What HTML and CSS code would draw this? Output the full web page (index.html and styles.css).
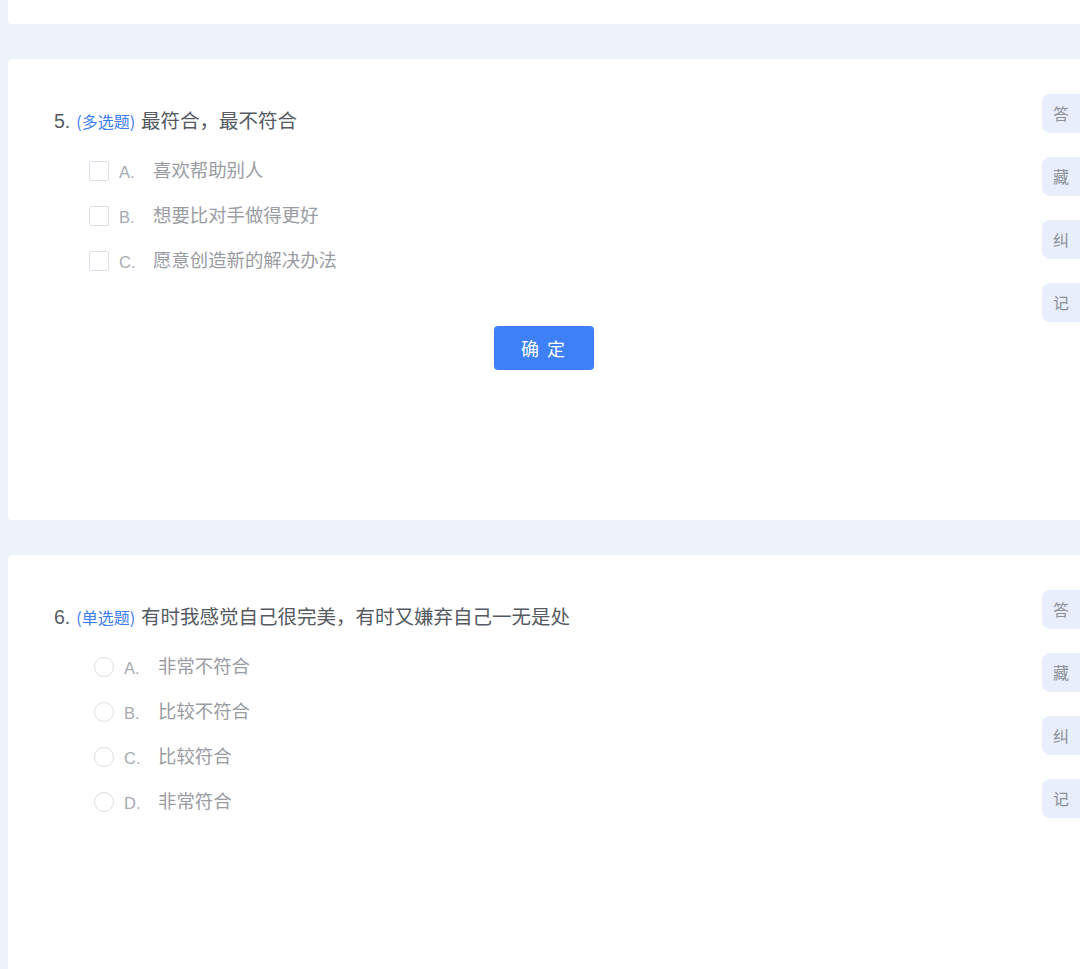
FILE: index.html
```html
<!DOCTYPE html>
<html lang="zh-CN">
  <head>
    <meta charset="UTF-8" />
    <meta name="viewport" content="width=device-width, initial-scale=1.0" />
    <title>问卷答题</title>
    <link rel="stylesheet" href="styles.css">
  </head>
  <body>
    <div class="paper">
      <div class="card tail"></div>

      <div class="card question">
        <div class="title">
          <span class="num">5.</span>
          <span class="type">(多选题)</span>
          <span class="stem">最符合，最不符合</span>
        </div>
        <ul class="options">
          <li class="option"><span class="box"></span><span class="letter">A.</span><span class="text">喜欢帮助别人</span></li>
          <li class="option"><span class="box"></span><span class="letter">B.</span><span class="text">想要比对手做得更好</span></li>
          <li class="option"><span class="box"></span><span class="letter">C.</span><span class="text">愿意创造新的解决办法</span></li>
        </ul>
        <div class="actions">
          <button class="confirm">确 定</button>
        </div>
        <div class="side-tabs">
          <span class="tab">答</span>
          <span class="tab">藏</span>
          <span class="tab">纠</span>
          <span class="tab">记</span>
        </div>
      </div>

      <div class="card question last">
        <div class="title">
          <span class="num">6.</span>
          <span class="type">(单选题)</span>
          <span class="stem">有时我感觉自己很完美，有时又嫌弃自己一无是处</span>
        </div>
        <ul class="options">
          <li class="option"><span class="box radio"></span><span class="letter">A.</span><span class="text">非常不符合</span></li>
          <li class="option"><span class="box radio"></span><span class="letter">B.</span><span class="text">比较不符合</span></li>
          <li class="option"><span class="box radio"></span><span class="letter">C.</span><span class="text">比较符合</span></li>
          <li class="option"><span class="box radio"></span><span class="letter">D.</span><span class="text">非常符合</span></li>
        </ul>
        <div class="side-tabs">
          <span class="tab">答</span>
          <span class="tab">藏</span>
          <span class="tab">纠</span>
          <span class="tab">记</span>
        </div>
      </div>
    </div>
  </body>
</html>
```

FILE: styles.css
```css
html,
body {
  height: 100%;
}
body {
  margin: 0;
  padding-left: 8px;
  background-color: #eef2fb;
  font-family: "Liberation Sans", "Noto Sans CJK SC", sans-serif;
  overflow: hidden;
}
.paper {
  display: flex;
  flex-direction: column;
  gap: 35px;
}
.card {
  background-color: #fff;
  border-radius: 4px 0 0 4px;
  position: relative;
}
.card.tail {
  height: 24px;
  border-radius: 0 0 0 4px;
}
.card.question {
  height: 461px;
  padding: 48px 0 0 46px;
  box-sizing: border-box;
}
.card.last {
  height: 460px;
}
.title {
  display: flex;
  align-items: baseline;
  height: 28px;
  line-height: 28px;
  color: #555a63;
  font-size: 19.5px;
}
.num {
  margin-right: 6px;
}
.type {
  color: #3b7cf0;
  font-family: "Noto Sans CJK SC", sans-serif;
  font-size: 16px;
  margin-right: 6px;
}
.options {
  list-style: none;
  margin: 13px 0 0;
  padding: 0 0 0 35px;
}
.option {
  display: flex;
  align-items: center;
  height: 45px;
  line-height: 1;
}
.box {
  width: 20px;
  height: 20px;
  border: 1px solid #dcdfe6;
  border-radius: 2px;
  box-sizing: border-box;
  margin-right: 10px;
  flex-shrink: 0;
}
.box.radio {
  border-radius: 50%;
  margin-left: 5px;
}
.letter {
  width: 34px;
  color: #a8abb2;
  font-size: 16.5px;
  line-height: 20px;
  padding-top: 2px;
}
.text {
  color: #9a9ca3;
  font-size: 18.4px;
  line-height: 24px;
}
.actions {
  display: flex;
  justify-content: center;
  margin: 43px 0 0 -46px;
}
.confirm {
  width: 100px;
  height: 44px;
  border: none;
  border-radius: 4px;
  background-color: #3d80f8;
  color: #fff;
  font-family: "Noto Sans CJK SC", sans-serif;
  font-size: 18px;
  letter-spacing: 2px;
  cursor: pointer;
}
.side-tabs {
  position: absolute;
  top: 35px;
  right: 0;
  display: flex;
  flex-direction: column;
  gap: 24px;
}
.tab {
  width: 38px;
  height: 39px;
  line-height: 39px;
  text-align: center;
  background-color: #e8eefb;
  border-radius: 8px 0 0 8px;
  color: #8b9099;
  font-family: "Noto Sans CJK SC", sans-serif;
  font-size: 16px;
}
```
